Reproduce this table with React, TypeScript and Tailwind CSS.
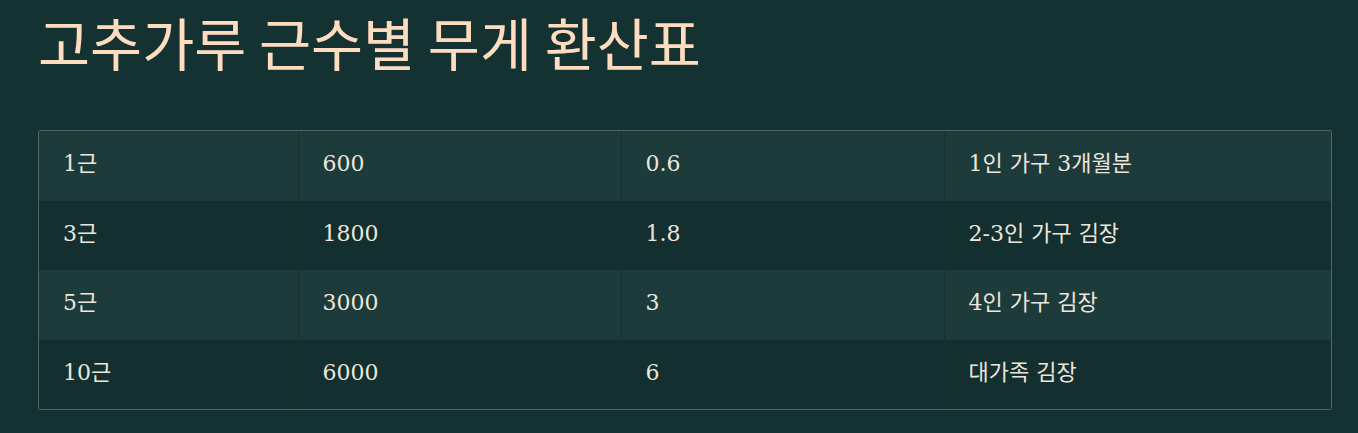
import React from "react";

const rows = [
  ["1근", "600", "0.6", "1인 가구 3개월분"],
  ["3근", "1800", "1.8", "2-3인 가구 김장"],
  ["5근", "3000", "3", "4인 가구 김장"],
  ["10근", "6000", "6", "대가족 김장"],
];

export default function App() {
  return (
    <div className="min-h-[433px] w-full bg-[#153232] pl-[38px] pr-[26px] pt-[1px] pb-6">
      <h1
        className="text-[56.6px] leading-[80px] text-[#fddcc0] font-normal"
        style={{ fontFamily: '"Noto Sans CJK KR", "Noto Sans", sans-serif' }}
      >
        고추가루 근수별 무게 환산표
      </h1>
      <div className="mt-[49px] border border-[#4b6866] rounded-[2px] overflow-hidden">
        <table
          className="w-full border-collapse text-[22px] text-[#ece6dc]"
          style={{ fontFamily: '"DejaVu Serif", "Noto Sans CJK KR", serif' }}
        >
          <colgroup>
            <col className="w-[259px]" />
            <col className="w-[323px]" />
            <col className="w-[323px]" />
            <col />
          </colgroup>
          <tbody>
            {rows.map((r, i) => (
              <tr key={i} className={i % 2 === 0 ? "bg-[#1d3b3b]" : "bg-[#132f2f]"}>
                {r.map((c, j) => (
                  <td
                    key={j}
                    className={`h-[69.5px] px-6 pb-[4px] align-middle ${j < 3 ? "border-r border-[#16302f]" : ""}`}
                  >
                    {c}
                  </td>
                ))}
              </tr>
            ))}
          </tbody>
        </table>
      </div>
    </div>
  );
}
